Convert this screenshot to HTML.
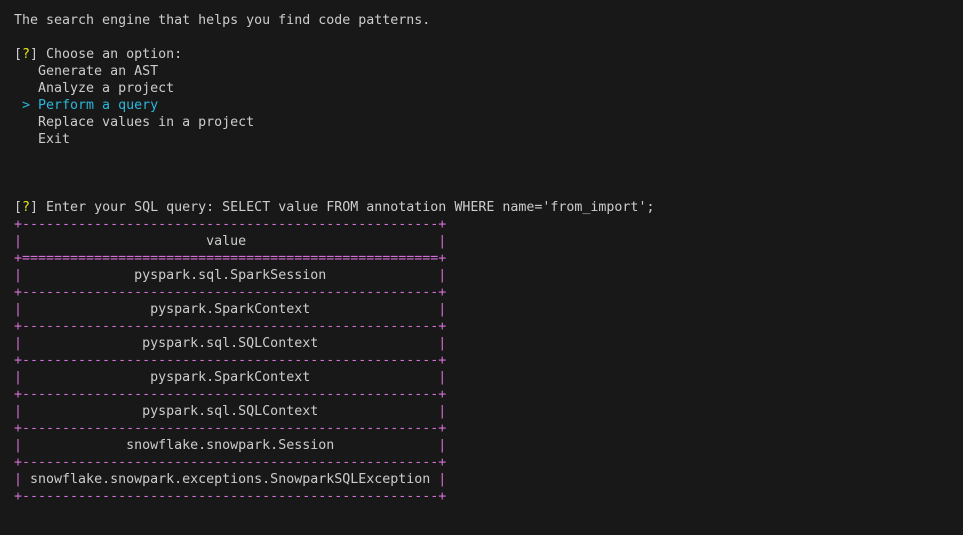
<!DOCTYPE html>
<html><head><meta charset="utf-8"><style>
html,body{margin:0;padding:0;background:#181818;width:963px;height:535px;overflow:hidden}
pre{margin:0;position:absolute;left:14px;top:12px;font-family:"DejaVu Sans Mono","Liberation Mono",monospace;font-size:13.3px;line-height:17px;color:#cccccc}
.y{color:#e5e510}.c{color:#29b8db}.p{color:#d670d6}
</style></head><body><pre>The search engine that helps you find code patterns.

[<span class="y">?</span>] Choose an option:
   Generate an AST
   Analyze a project
<span class="c"> &gt; Perform a query</span>
   Replace values in a project
   Exit



[<span class="y">?</span>] Enter your SQL query: SELECT value FROM annotation WHERE name='from_import';
<span class="p">+----------------------------------------------------+</span>
<span class="p">|</span>                       value                        <span class="p">|</span>
<span class="p">+====================================================+</span>
<span class="p">|</span>              pyspark.sql.SparkSession              <span class="p">|</span>
<span class="p">+----------------------------------------------------+</span>
<span class="p">|</span>                pyspark.SparkContext                <span class="p">|</span>
<span class="p">+----------------------------------------------------+</span>
<span class="p">|</span>               pyspark.sql.SQLContext               <span class="p">|</span>
<span class="p">+----------------------------------------------------+</span>
<span class="p">|</span>                pyspark.SparkContext                <span class="p">|</span>
<span class="p">+----------------------------------------------------+</span>
<span class="p">|</span>               pyspark.sql.SQLContext               <span class="p">|</span>
<span class="p">+----------------------------------------------------+</span>
<span class="p">|</span>             snowflake.snowpark.Session             <span class="p">|</span>
<span class="p">+----------------------------------------------------+</span>
<span class="p">|</span> snowflake.snowpark.exceptions.SnowparkSQLException <span class="p">|</span>
<span class="p">+----------------------------------------------------+</span></pre></body></html>
